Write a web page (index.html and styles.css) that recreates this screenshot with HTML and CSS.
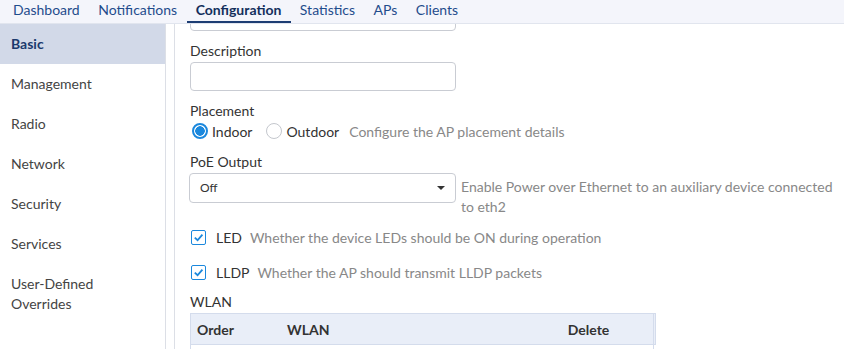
FILE: index.html
```html
<!DOCTYPE html>
<html lang="en">
<head>
    <meta charset="UTF-8">
    <meta name="viewport" content="width=device-width, initial-scale=1.0">
    <title>AP Configuration</title>
    <link rel="stylesheet" href="styles.css">
</head>
<body>
    <nav class="tabs">
        <a class="tab">Dashboard</a>
        <a class="tab">Notifications</a>
        <a class="tab active">Configuration</a>
        <a class="tab">Statistics</a>
        <a class="tab">APs</a>
        <a class="tab">Clients</a>
    </nav>

    <div class="layout">
        <ul class="sidebar">
            <li class="selected">Basic</li>
            <li>Management</li>
            <li>Radio</li>
            <li>Network</li>
            <li>Security</li>
            <li>Services</li>
            <li class="two-line">User-Defined<br>Overrides</li>
        </ul>

        <div class="panel">
            <div class="cut-field">
                <input class="text-input" type="text">
            </div>

            <div class="field">
                <label>Description</label>
                <input class="text-input" type="text">
            </div>

            <div class="field">
                <label>Placement</label>
                <div class="radio-row">
                    <span class="radio checked"></span><span class="option">Indoor</span>
                    <span class="radio"></span><span class="option">Outdoor</span>
                    <span class="hint">Configure the AP placement details</span>
                </div>
            </div>

            <div class="field poe">
                <label>PoE Output</label>
                <div class="select-row">
                    <div class="select">Off<span class="caret"></span></div>
                    <span class="hint wrap">Enable Power over Ethernet to an auxiliary device connected to eth2</span>
                </div>
            </div>

            <div class="check-row first">
                <span class="checkbox"><svg viewBox="0 0 14 14"><path d="M3 7.2 L6 10 L11.2 4"/></svg></span>
                <span class="option">LED</span>
                <span class="hint">Whether the device LEDs should be ON during operation</span>
            </div>

            <div class="check-row">
                <span class="checkbox"><svg viewBox="0 0 14 14"><path d="M3 7.2 L6 10 L11.2 4"/></svg></span>
                <span class="option">LLDP</span>
                <span class="hint">Whether the AP should transmit LLDP packets</span>
            </div>

            <div class="field">
                <label>WLAN</label>
                <table class="wlan-table">
                    <thead>
                        <tr>
                            <th class="col-order">Order</th>
                            <th class="col-wlan">WLAN</th>
                            <th class="col-delete">Delete</th>
                            <th class="col-end"></th>
                        </tr>
                    </thead>
                    <tbody>
                        <tr><td></td><td></td><td></td><td></td></tr>
                    </tbody>
                </table>
            </div>
        </div>
    </div>
</body>
</html>
```

FILE: styles.css
```css
body {
    margin: 0;
    font-family: Lato, "Open Sans", sans-serif;
    font-size: 14px;
    color: #333;
    background-color: #fff;
    height: 349px;
    overflow: hidden;
}
.tabs {
    display: flex;
    height: 23px;
    padding-left: 4px;
    background-color: #f4f5fb;
    border-bottom: 1px solid #e1e5ee;
}
.tab {
    padding: 0 9.5px 0 9px;
    line-height: 20px;
    color: #1f4c8c;
    font-size: 14px;
    border-bottom: 2px solid transparent;
}
.tab.active {
    color: #132f5c;
    font-weight: bold;
    border-bottom-color: #1d3d73;
}
.layout {
    display: flex;
    height: 325px;
}
.sidebar {
    list-style: none;
    margin: 0;
    padding: 0;
    width: 165px;
    border-right: 1px solid #dcdfe6;
}
.sidebar li {
    height: 40px;
    line-height: 40px;
    padding-left: 11px;
    color: #444;
}
.sidebar li.selected {
    background-color: #d2d9e8;
    color: #1b3a6d;
    font-weight: bold;
}
.sidebar li.two-line {
    line-height: 20px;
    padding-top: 10px;
}
.panel {
    margin-left: 8px;
    padding-left: 15px;
    border-left: 1px solid #dcdfe6;
    flex: 1;
    overflow: hidden;
}
.cut-field {
    height: 7px;
    overflow: hidden;
}
.cut-field .text-input {
    margin-top: -22px;
}
.text-input {
    display: block;
    box-sizing: border-box;
    width: 266px;
    height: 29px;
    border: 1px solid #c9ccd3;
    border-radius: 4px;
    background: #fff;
}
.field {
    margin-top: 10px;
}
.field.poe {
    margin-top: 11px;
}
.field label {
    display: block;
    line-height: 20px;
    margin-bottom: 1px;
}
.radio-row {
    display: flex;
    align-items: center;
    height: 20px;
    margin-top: -1px;
}
.radio {
    box-sizing: border-box;
    width: 16px;
    height: 16px;
    border: 1px solid #c4c7cd;
    border-radius: 50%;
    margin-left: 2px;
    margin-right: 4px;
}
.radio.checked {
    border: 2px solid #1b88dd;
    background: radial-gradient(circle, #1b88dd 0 4.5px, #fff 5px);
}
.radio-row .option {
    margin-right: 12px;
}
.radio-row .option + .hint {
    margin-left: -2px;
}
.option {
    margin-right: 8px;
}
.hint {
    color: #888;
}
.select-row {
    display: flex;
    align-items: flex-start;
}
.select {
    box-sizing: border-box;
    width: 267px;
    height: 30px;
    border: 1px solid #c9ccd3;
    border-radius: 4px;
    padding: 0 10px;
    line-height: 28px;
    font-size: 12px;
    position: relative;
    flex-shrink: 0;
    margin-left: -1px;
}
.caret {
    position: absolute;
    right: 10px;
    top: 12px;
    border-left: 4px solid transparent;
    border-right: 4px solid transparent;
    border-top: 4px solid #333;
}
.hint.wrap {
    margin-left: 5px;
    margin-top: 4px;
    line-height: 20px;
    width: 380px;
}
.check-row {
    display: flex;
    align-items: center;
    height: 20px;
    margin-top: 15px;
}
.check-row.first {
    margin-top: 10px;
}
.checkbox {
    box-sizing: border-box;
    width: 15px;
    height: 15px;
    border: 1px solid #1b88dd;
    border-radius: 2px;
    margin-left: 1px;
    margin-right: 10px;
    display: flex;
}
.checkbox svg {
    width: 13px;
    height: 13px;
}
.checkbox path {
    fill: none;
    stroke: #1b88dd;
    stroke-width: 2;
}
.wlan-table {
    border-collapse: collapse;
    width: 466px;
}
.wlan-table th {
    background-color: #e9eef8;
    border-top: 1px solid #d4dcec;
    border-bottom: 1px solid #d4dcec;
    height: 30px;
    padding: 0 6px;
    text-align: left;
    font-weight: bold;
    color: #333;
}
.wlan-table th.col-order {
    width: 78px;
    border-left: 1px solid #d4dcec;
}
.wlan-table th.col-delete {
    width: 116px;
    text-align: center;
}
.wlan-table th.col-end {
    width: 1px;
    padding: 0;
    border-left: 1px solid #d4dcec;
    border-right: 1px solid #d4dcec;
}
.wlan-table td {
    height: 30px;
}
.wlan-table td:first-child {
    border-left: 1px solid #d4dcec;
}
.wlan-table td:last-child {
    border-left: 1px solid #d4dcec;
}
```
